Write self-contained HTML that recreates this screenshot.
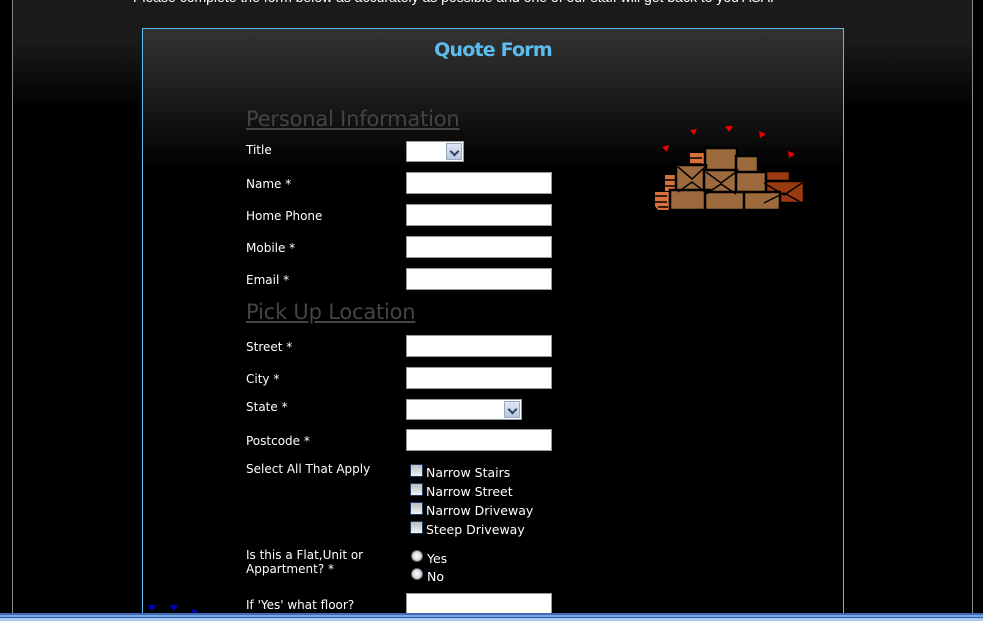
<!DOCTYPE html>
<html style="width:983px;height:621px;overflow:hidden"><head><meta charset="utf-8"><style>
*{margin:0;padding:0;box-sizing:border-box}
body{width:983px;height:621px;overflow:hidden;background:#000;position:relative;font-family:"DejaVu Sans","Liberation Sans",sans-serif;color:#fff}
#outer{position:absolute;left:12px;top:0;width:961px;height:621px;border-left:1px solid #888;border-right:1px solid #888;background:linear-gradient(#1b1b1b 0,#1b1b1b 40px,#000 110px)}
#top{position:absolute;left:133px;top:-11px;font:14px "Liberation Sans",sans-serif;color:#fff;white-space:nowrap}
#box{position:absolute;left:142px;top:28px;width:702px;height:593px;border:1px solid #5bbcf0;border-bottom:none;background:linear-gradient(#333 0,#222 50px,#000 140px)}
h1{position:absolute;left:0;width:100%;text-align:center;font:bold 19px "DejaVu Sans",sans-serif;color:#5bbcf0;letter-spacing:-0.8px}
.h{position:absolute;left:246px;font-size:21px;color:#444;text-decoration:underline;font-family:"DejaVu Sans",sans-serif;letter-spacing:-0.2px}
.l{position:absolute;left:246px;font-size:12px;line-height:14px;color:#fff;margin-top:1px}
.i{position:absolute;left:406px;width:146px;height:22px;background:#fff;border:1px solid #999}
.s{position:absolute;left:406px;height:21px;background:#fff;border:1px solid #999}
.s b{position:absolute;right:1px;top:1px;width:16px;height:17px;background:linear-gradient(#dde6f5,#b8c8e4);border:1px solid #9ab}
.s b:after{content:"";position:absolute;left:4px;top:4px;width:5px;height:5px;border-right:2px solid #345;border-bottom:2px solid #345;transform:rotate(45deg)}
.c{position:absolute;left:410px;width:13px;height:13px;background:linear-gradient(#bbb,#f4f4f4);border:1px solid #1c3a5c}
.r{position:absolute;left:411px;width:12px;height:12px;border-radius:50%;background:radial-gradient(#fff,#bbb);border:1px solid #567}
.t{position:absolute;left:426px;font-size:12.5px;color:#fff;margin-top:1px}
#bar{position:absolute;left:0;top:613px;width:983px;height:8px;background:linear-gradient(#3d6bb8 0,#3d6bb8 2px,#7ba7e0 2px,#7ba7e0 4px,#2e5aa8 4px,#2e5aa8 5px,#a8c8ec 5px)}
</style></head><body>
<div id="outer"></div>
<div id="top">Please complete the form below as accurately as possible and one of our staff will get back to you ASAP</div>
<div id="box"><h1 style="top:10px">Quote Form</h1></div>
<div class="h" style="top:107px">Personal Information</div>
<div class="l" style="top:142px">Title</div><div class="s" style="top:141px;width:58px"><b></b></div>
<div class="l" style="top:176px">Name *</div><div class="i" style="top:172px"></div>
<div class="l" style="top:208px">Home Phone</div><div class="i" style="top:204px"></div>
<div class="l" style="top:240px">Mobile *</div><div class="i" style="top:236px"></div>
<div class="l" style="top:272px">Email *</div><div class="i" style="top:268px"></div>
<div class="h" style="top:300px">Pick Up Location</div>
<div class="l" style="top:339px">Street *</div><div class="i" style="top:335px"></div>
<div class="l" style="top:371px">City *</div><div class="i" style="top:367px"></div>
<div class="l" style="top:399px">State *</div><div class="s" style="top:399px;width:116px"><b></b></div>
<div class="l" style="top:433px">Postcode *</div><div class="i" style="top:429px"></div>
<div class="l" style="top:461px">Select All That Apply</div>
<div class="c" style="top:464px"></div><div class="t" style="top:464px">Narrow Stairs</div>
<div class="c" style="top:483px"></div><div class="t" style="top:483px">Narrow Street</div>
<div class="c" style="top:502px"></div><div class="t" style="top:502px">Narrow Driveway</div>
<div class="c" style="top:521px"></div><div class="t" style="top:521px">Steep Driveway</div>
<div class="l" style="top:547px">Is this a Flat,Unit or<br>Appartment? *</div>
<div class="r" style="top:550px"></div><div class="t" style="top:550px;left:427px">Yes</div>
<div class="r" style="top:568px"></div><div class="t" style="top:568px;left:427px">No</div>
<div class="l" style="top:597px">If 'Yes' what floor?</div><div class="i" style="top:593px"></div>
<svg style="position:absolute;left:650px;top:120px" width="160" height="95" viewBox="0 0 160 95">
<g fill="#e00"><path d="M12 27l7-2-2 7z"/><path d="M40 10l7-1-3 6z"/><path d="M75 6h8l-4 6z"/><path d="M109 11l7 3-6 4z"/><path d="M138 31l7 3-6 4z"/></g>
<g fill="#d8703c"><path d="M5 72h17v18H8l-3-4z"/><path d="M15 55h12v16H15z"/><path d="M40 33h16v17H40z"/></g>
<g stroke="#000" stroke-width="2.5">
<rect x="55" y="28" width="32" height="24" fill="#9c6a3c"/>
<rect x="86" y="36" width="22" height="18" fill="#9c6a3c"/>
<rect x="112" y="51" width="28" height="14" fill="#9a3a10"/>
<rect x="112" y="61" width="42" height="22" fill="#9a3a10"/>
<rect x="26" y="45" width="30" height="27" fill="#9c6a3c"/>
<rect x="54" y="50" width="33" height="24" fill="#9c6a3c"/>
<rect x="86" y="52" width="30" height="24" fill="#9c6a3c"/>
<rect x="20" y="70" width="40" height="20" fill="#9c6a3c"/>
<rect x="55" y="72" width="40" height="18" fill="#9c6a3c"/>
<rect x="94" y="72" width="36" height="18" fill="#9c6a3c"/>
</g>
<g stroke="#000" stroke-width="1.5" fill="none"><path d="M28 47l14 12 13-12M28 72l14-10 13 10M56 52l15 11 15-11M56 74l15-10 15 10M114 63l20 12 18-12M114 83l20-10 18 10"/></g>
<g stroke="#000" stroke-width="1.5"><path d="M5 76h12M5 82h12M8 87h10M15 60h10M15 66h10M40 38h12M40 44h12"/></g>
</svg>
<svg style="position:absolute;left:146px;top:603px" width="60" height="12"><g fill="#00c"><path d="M2 2h8l-4 6z"/><path d="M24 2h8l-4 6z"/><path d="M46 6l6 2-5 4z"/></g></svg>
<div id="bar"></div>
</body></html>
